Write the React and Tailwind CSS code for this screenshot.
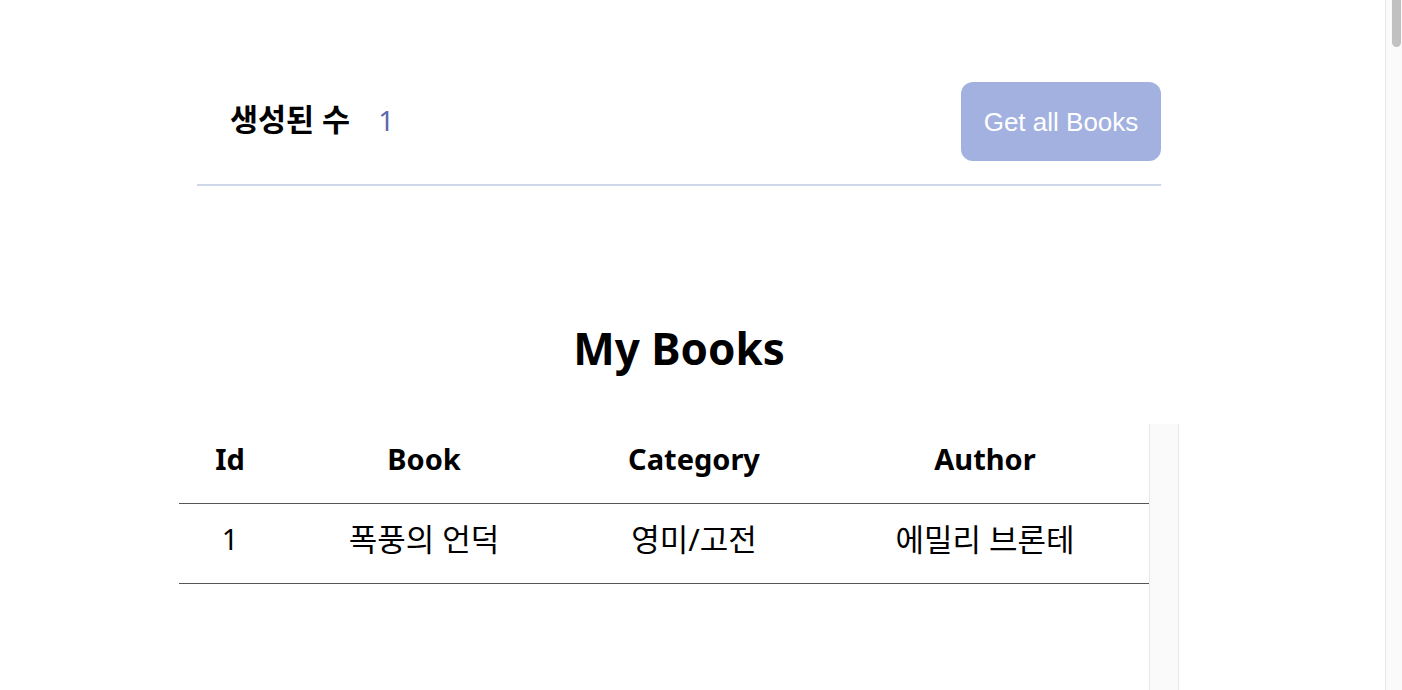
import React from 'react';

const books = [{ id: 1, book: '폭풍의 언덕', category: '영미/고전', author: '에밀리 브론테' }];

export default function App() {
  const font = { fontFamily: '"Noto Sans", "Noto Sans CJK KR", sans-serif' };

  return (
    <div className="flex h-[690px] overflow-hidden bg-white text-black" style={font}>
      <div className="flex-1 min-w-0">
        <div className="ml-[179px] w-[1000px] pt-[82px]">
          {/* Header */}
          <div className="mx-[18px] border-b-2 border-[#cfd7ea] pb-[23px] flex items-center justify-between">
            <div className="flex items-center pl-[33px] -mt-[4px]">
              <span className="text-[30.5px] font-bold leading-none">생성된 수</span>
              <span className="ml-[28px] text-[28px] leading-none text-[#5b6aac]">1</span>
            </div>
            <button
              className="h-[79px] w-[200px] rounded-[12px] bg-[#a3b1e0] pt-[2px] text-[26px] text-white"
              style={{ fontFamily: '"Liberation Sans", Arial, sans-serif' }}
            >
              Get all Books
            </button>
          </div>

          {/* Title */}
          <h1 className="mt-[132px] text-center text-[44px] font-bold leading-[60px]">My Books</h1>

          {/* Table with scroll area */}
          <div className="mt-[46px] flex h-[300px]">
            <div className="w-[970px]">
              <table className="w-full table-fixed border-collapse text-[29px]">
                <colgroup>
                  <col className="w-[102px]" />
                  <col className="w-[286px]" />
                  <col className="w-[254px]" />
                  <col className="w-[328px]" />
                </colgroup>
                <thead>
                  <tr className="h-[79px] border-b border-[#555]">
                    <th className="pb-[10px] font-bold">Id</th>
                    <th className="pb-[10px] font-bold">Book</th>
                    <th className="pb-[10px] font-bold">Category</th>
                    <th className="pb-[10px] font-bold">Author</th>
                  </tr>
                </thead>
                <tbody>
                  {books.map((b) => (
                    <tr key={b.id} className="h-[80px] border-b border-[#555]">
                      <td className="pb-[8px] text-center">{b.id}</td>
                      <td className="pb-[8px] text-center text-[31px]">{b.book}</td>
                      <td className="pb-[8px] text-center text-[31px]">{b.category}</td>
                      <td className="pb-[8px] text-center text-[31px]">{b.author}</td>
                    </tr>
                  ))}
                </tbody>
              </table>
            </div>
            <div className="w-[30px] border-l border-r border-[#e8e8e8] bg-[#fafafa]" />
          </div>
        </div>
      </div>

      {/* Page scrollbar */}
      <div className="w-[17px] shrink-0 border-l border-[#e8e8e8] bg-[#fafafa] pl-[6px] pr-[1px]">
        <div className="h-[47px] rounded-b-[6px] bg-[#c1c1c1]" />
      </div>
    </div>
  );
}
